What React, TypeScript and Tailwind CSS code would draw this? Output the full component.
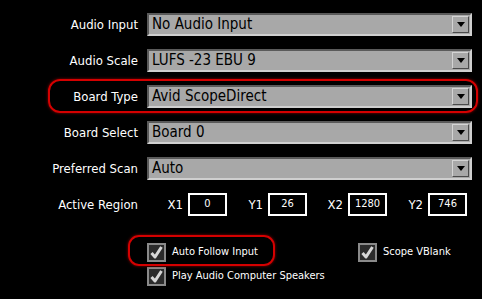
import React from 'react';

const font = "font-[family-name:'DejaVu_Sans_Condensed',_'DejaVu_Sans',_sans-serif]";

function Combo({ value }: { value: string }) {
  return (
    <div className="flex h-[23px] w-[325px] items-center border-2 border-t-[#5a5a5a] border-l-[#5a5a5a] border-r-[#cfcfcf] border-b-[#cfcfcf] bg-[#a8a8a8]">
      <span className="flex-1 pl-[3px] text-[15px] leading-none text-black">{value}</span>
      <div className="mr-[1px] flex h-[17px] w-[17px] items-center justify-center border border-t-[#d4d4d4] border-l-[#d4d4d4] border-r-[#4a4a4a] border-b-[#4a4a4a] bg-[#a8a8a8]">
        <svg width="8" height="5" viewBox="0 0 8 5">
          <path d="M0 0h8L4 5z" fill="#000" />
        </svg>
      </div>
    </div>
  );
}

function Row({ label, value }: { label: string; value: string }) {
  return (
    <div className="flex items-center">
      <div className="w-[138px] text-right text-[13px] text-white">{label}</div>
      <div className="ml-[9px]">
        <Combo value={value} />
      </div>
    </div>
  );
}

function Check({ label }: { label: string }) {
  return (
    <div className="flex items-center">
      <div className="flex h-[19px] w-[19px] items-center justify-center border-2 border-[#8a8a8a] bg-[#2b2b2b]">
        <svg width="15" height="15" viewBox="0 0 15 15">
          <path d="M2.5 8 L6 12 L12.5 2" fill="none" stroke="#d6d6d6" strokeWidth="3" strokeLinejoin="round" />
        </svg>
      </div>
      <span className="ml-[6px] text-[11px] text-white">{label}</span>
    </div>
  );
}

function Coord({ label, value }: { label: string; value: string }) {
  return (
    <div className="flex w-[80px] items-center justify-end">
      <span className="mr-[5px] text-[13px] text-white">{label}</span>
      <div className="flex h-[23px] w-[39px] items-center justify-center border-2 border-white bg-black text-[11px] text-white">
        {value}
      </div>
    </div>
  );
}

export default function App() {
  return (
    <div className={`h-[299px] w-[482px] overflow-hidden bg-black pt-[13px] ${font}`}>
      <div className="flex flex-col gap-[13px]">
        <Row label="Audio Input" value="No Audio Input" />
        <Row label="Audio Scale" value="LUFS -23 EBU 9" />
        <div className="relative">
          <Row label="Board Type" value="Avid ScopeDirect" />
          <div className="pointer-events-none absolute left-[48px] top-[-6px] h-[34px] w-[430px] rounded-[12px] border-2 border-[#d40000] shadow-[0_0_3px_#900000]" />
        </div>
        <Row label="Board Select" value="Board 0" />
        <Row label="Preferred Scan" value="Auto" />
        <div className="flex items-center">
          <div className="w-[138px] text-right text-[13px] text-white">Active Region</div>
          <div className="ml-[9px] flex">
            <Coord label="X1" value="0" />
            <Coord label="Y1" value="26" />
            <Coord label="X2" value="1280" />
            <Coord label="Y2" value="746" />
          </div>
        </div>
      </div>
      <div className="mt-[27px] flex flex-col gap-[5px] pl-[147px]">
        <div className="relative flex">
          <div className="w-[211px]">
            <Check label="Auto Follow Input" />
          </div>
          <Check label="Scope VBlank" />
          <div className="pointer-events-none absolute left-[-19px] top-[-8px] h-[31px] w-[147px] rounded-[11px] border-2 border-[#d40000] shadow-[0_0_3px_#900000]" />
        </div>
        <Check label="Play Audio Computer Speakers" />
      </div>
    </div>
  );
}
